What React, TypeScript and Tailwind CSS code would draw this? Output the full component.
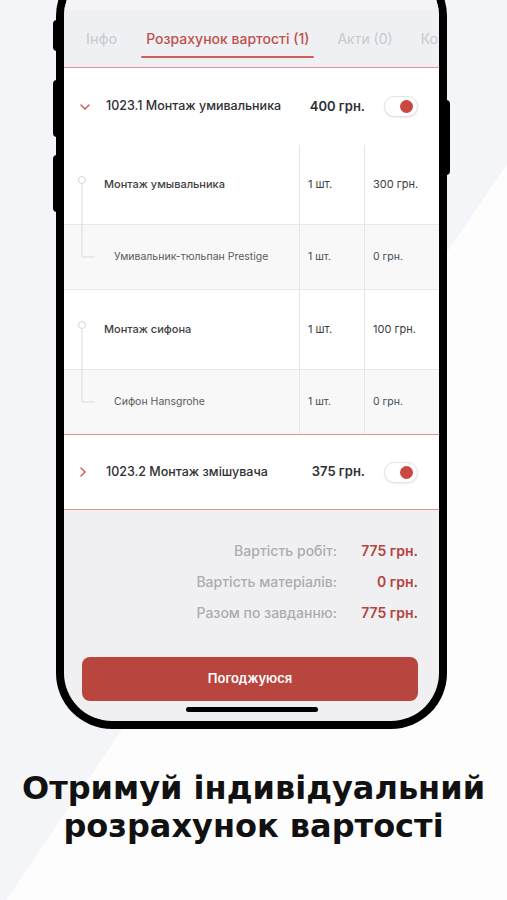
import React from "react";

const Toggle = () => (
  <div className="relative w-[34px] h-[21px] rounded-full bg-white border border-[#e2e2e4] shadow-[0_1px_2px_rgba(0,0,0,0.08)]">
    <span className="absolute right-[4px] top-[3px] w-[13px] h-[13px] rounded-full bg-[#c9473f]" />
  </div>
);

const Chevron = ({ open }: { open: boolean }) =>
  open ? (
    <svg width="10" height="6" viewBox="0 0 10 6" className="shrink-0">
      <path d="M1 1l4 4 4-4" fill="none" stroke="#cf5d58" strokeWidth="1.5" strokeLinecap="round" />
    </svg>
  ) : (
    <svg width="6" height="10" viewBox="0 0 6 10" className="shrink-0">
      <path d="M1 1l4 4-4 4" fill="none" stroke="#cf5d58" strokeWidth="1.5" strokeLinecap="round" />
    </svg>
  );

const TaskRow = ({ title, price, open }: { title: string; price: string; open: boolean }) => (
  <div className="flex items-center h-full pl-[16px] pr-[21px]">
    <div className="w-[26px] flex justify-start">
      <Chevron open={open} />
    </div>
    <span className="flex-1 text-[12.5px] text-[#2f2f33] font-medium">{title}</span>
    <span className="text-[13px] text-[#2f2f33] font-semibold mr-[19px]">{price}</span>
    <Toggle />
  </div>
);

type Line = { name: string; qty: string; price: string };

// parent work line + its material line, joined by the tree connector
const Group = ({ parent, child }: { parent: Line; child: Line }) => (
  <div className="relative">
    <svg className="absolute left-0 top-0" width="40" height="260">
      <circle cx="18" cy="35" r="3.5" fill="white" stroke="#d6d6d8" strokeWidth="1" />
      <path d="M18 39 V112 H31" fill="none" stroke="#dcdcde" strokeWidth="1" />
    </svg>
    <div className="grid grid-cols-[235px_65px_1fr] h-[80px] bg-white border-b border-[#e8e8ea]">
      <div className="flex items-center pl-[40px] text-[11px] font-medium text-[#3e3e42]">{parent.name}</div>
      <div className="flex items-center pl-[8px] text-[11px] text-[#3c3c40] border-l border-[#e6e6e8]">{parent.qty}</div>
      <div className="flex items-center pl-[8px] text-[11px] text-[#3c3c40] border-l border-[#e6e6e8]">{parent.price}</div>
    </div>
    <div className="grid grid-cols-[235px_65px_1fr] h-[64px] bg-[#f8f8f9]">
      <div className="flex items-center pl-[50px] text-[10.5px] text-[#5a5a5e]">{child.name}</div>
      <div className="flex items-center pl-[8px] text-[10.5px] text-[#4a4a4e] border-l border-[#e6e6e8]">{child.qty}</div>
      <div className="flex items-center pl-[8px] text-[10.5px] text-[#4a4a4e] border-l border-[#e6e6e8]">{child.price}</div>
    </div>
  </div>
);

const totals = [
  { label: "Вартість робіт:", value: "775 грн." },
  { label: "Вартість матеріалів:", value: "0 грн." },
  { label: "Разом по завданню:", value: "775 грн." },
];

export default function App() {
  return (
    <div className="relative w-[507px] h-[900px] overflow-hidden bg-[#f3f5f8] font-['Inter',sans-serif]">
      {/* background diagonal */}
      <svg className="absolute inset-0" width="507" height="900">
        <polygon points="507,164 507,900 0,900 0,909" fill="#fdfdfd" />
      </svg>

      <div className="relative flex flex-col">
        {/* phone */}
        <div className="relative ml-[56px] mt-[-40px] w-[391px] h-[769px] rounded-[56px] bg-black p-[8px]">
          <span className="absolute left-[-3px] top-[60px] w-[4px] h-[31px] rounded-l bg-black" />
          <span className="absolute left-[-3px] top-[120px] w-[4px] h-[57px] rounded-l bg-black" />
          <span className="absolute left-[-3px] top-[195px] w-[4px] h-[57px] rounded-l bg-black" />
          <span className="absolute right-[-3px] top-[140px] w-[4px] h-[75px] rounded-r bg-black" />

          <div className="flex flex-col w-full h-full rounded-[48px] overflow-hidden bg-[#f0f0f3]">
            <div className="h-[42px] shrink-0 bg-[#f4f4f6]" />

            {/* tabs */}
            <div className="flex items-stretch h-[58px] shrink-0 bg-[#eef0f3] border-b border-[#e38f8b] pl-[22px] gap-[24px] text-[14px] whitespace-nowrap overflow-hidden">
              <div className="flex items-center text-[#c9c9ce] text-[14.5px]">Інфо</div>
              <div className="relative flex items-center px-[5px] text-[#c0504b] font-medium">
                Розрахунок вартості (1)
                <span className="absolute left-0 right-0 bottom-[9px] h-[2px] rounded bg-[#cf605b]" />
              </div>
              <div className="flex items-center text-[#c9c9ce] -ml-[1px]">Акти (0)</div>
              <div className="flex items-center text-[#c9c9ce] ml-[4px]">Ко</div>
            </div>

            <div className="h-[77px] shrink-0 bg-white">
              <TaskRow title="1023.1 Монтаж умивальника" price="400 грн." open />
            </div>

            <Group
              parent={{ name: "Монтаж умывальника", qty: "1 шт.", price: "300 грн." }}
              child={{ name: "Умивальник-тюльпан Prestige", qty: "1 шт.", price: "0 грн." }}
            />
            <div className="border-t border-[#e8e8ea]">
              <Group
                parent={{ name: "Монтаж сифона", qty: "1 шт.", price: "100 грн." }}
                child={{ name: "Сифон Hansgrohe", qty: "1 шт.", price: "0 грн." }}
              />
            </div>

            <div className="h-[76px] shrink-0 bg-white border-t border-b border-[#e38f8b]">
              <TaskRow title="1023.2 Монтаж змішувача" price="375 грн." open={false} />
            </div>

            {/* totals */}
            <div className="flex flex-col gap-[11px] pt-[31px] pr-[21px]">
              {totals.map((t) => (
                <div key={t.label} className="flex justify-end items-center text-[14px] leading-[20px]">
                  <span className="text-[#acacb0] font-medium">{t.label}</span>
                  <span className="w-[81px] text-right text-[#b4443e] font-semibold">{t.value}</span>
                </div>
              ))}
            </div>

            <button className="mt-[34px] ml-[18px] mr-[21px] h-[44px] rounded-[8px] bg-[#b9453f] text-white text-[13px] font-semibold">
              Погоджуюся
            </button>
            <div className="mt-[6px] mx-auto w-[132px] h-[5px] rounded-full bg-black" />
          </div>
        </div>

        {/* caption */}
        <h1 className="mt-[40px] text-center text-[32px] leading-[38px] font-bold text-[#111] font-['DejaVu_Sans',sans-serif]">
          Отримуй індивідуальний
          <br />
          розрахунок вартості
        </h1>
      </div>
    </div>
  );
}
